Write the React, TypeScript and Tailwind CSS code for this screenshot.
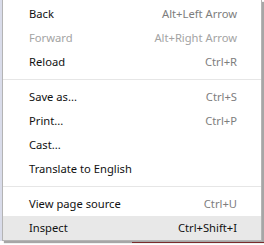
type Item = { label: string; shortcut?: string; disabled?: boolean; active?: boolean } | 'sep';

const items: Item[] = [
  { label: 'Back', shortcut: 'Alt+Left Arrow' },
  { label: 'Forward', shortcut: 'Alt+Right Arrow', disabled: true },
  { label: 'Reload', shortcut: 'Ctrl+R' },
  'sep',
  { label: 'Save as...', shortcut: 'Ctrl+S' },
  { label: 'Print...', shortcut: 'Ctrl+P' },
  { label: 'Cast...' },
  { label: 'Translate to English' },
  'sep',
  { label: 'View page source', shortcut: 'Ctrl+U' },
  { label: 'Inspect', shortcut: 'Ctrl+Shift+I', active: true },
];

const App = () => {
  return (
    <div
      className="relative w-[264px] h-[245px] overflow-hidden bg-white"
      style={{ fontFamily: '"Noto Sans", "Open Sans", sans-serif' }}
    >
      <div className="flex h-[241px]">
        {/* page behind, left edge */}
        <div className="w-[2px] bg-[#d9dcea]" />

        {/* Menu */}
        <div className="w-[260px] bg-white border-x border-b border-[#b4b4b4] pt-[2px] shadow-[2px_2px_1px_rgba(0,0,0,0.35)]">
          {items.map((item, i) =>
            item === 'sep' ? (
              <div key={i} className="h-px bg-[#e6e6e6] my-[5px]" />
            ) : (
              <div
                key={i}
                className={`flex items-center justify-between h-6 pl-[26px] pr-[24px] text-[11.2px] ${
                  item.active ? 'bg-[#e8e8e8]' : ''
                }`}
              >
                <span className={item.disabled ? 'text-[#a3a3a3]' : 'text-[#111111]'}>{item.label}</span>
                {item.shortcut && (
                  <span
                    className={
                      item.active ? 'text-[#111111]' : item.disabled ? 'text-[#a3a3a3]' : 'text-[#7d7d7d]'
                    }
                  >
                    {item.shortcut}
                  </span>
                )}
              </div>
            )
          )}
        </div>
      </div>

      {/* background strip below the menu */}
      <div className="flex h-[4px] mt-[1px]">
        <div className="w-[132px]" />
        <div className="flex-1 h-[1px] bg-[#7a2a2a]" />
      </div>
    </div>
  );
};

export default App;
